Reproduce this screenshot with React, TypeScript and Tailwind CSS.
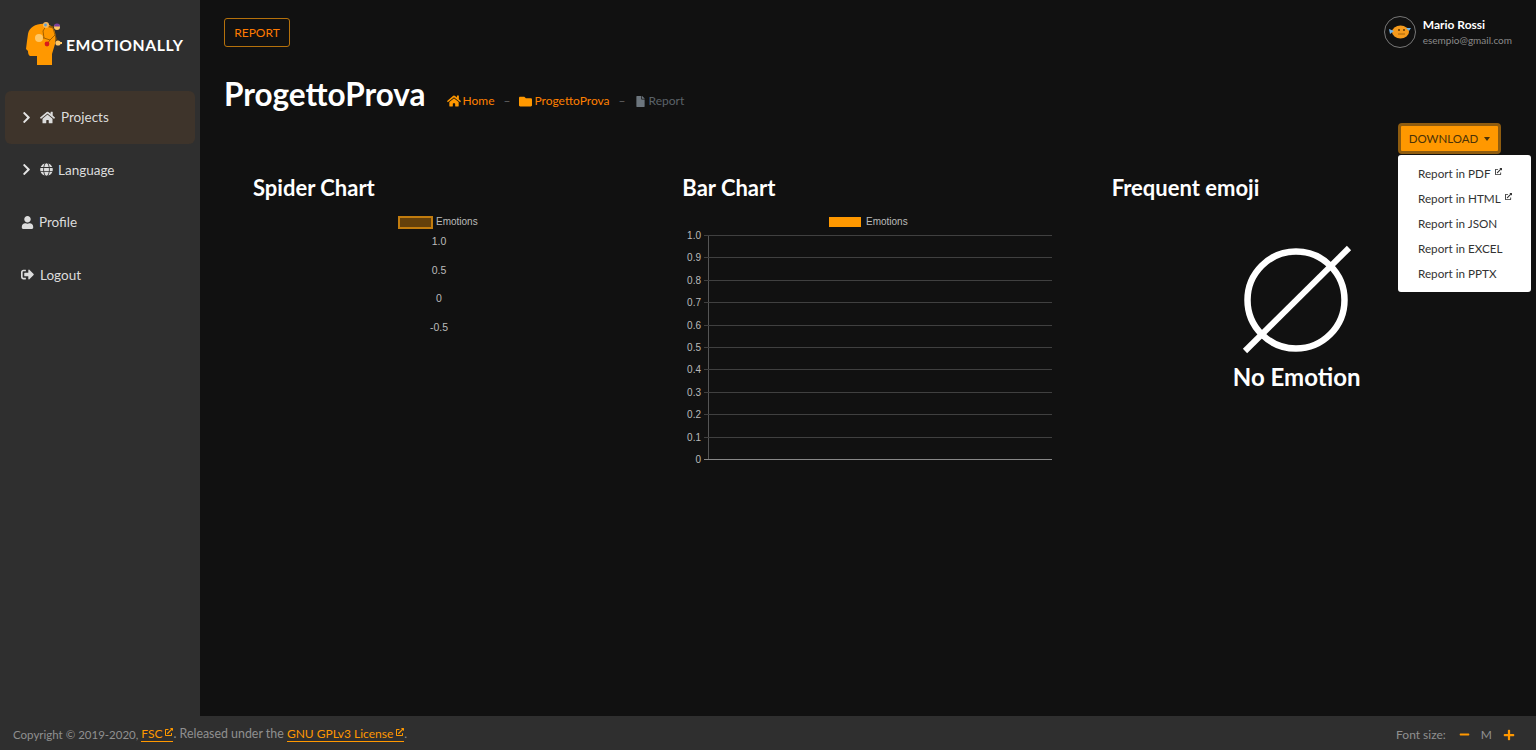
import { FaChevronRight, FaExternalLinkAlt, FaFile, FaFolder, FaGlobe, FaHome, FaMinus, FaPlus, FaSignOutAlt, FaUser } from "react-icons/fa";

const font = "font-['Lato','Open_Sans',sans-serif]";

// Head logo with the small emotion nodes
const Logo = () => (
  <svg width="42" height="48" viewBox="0 0 42 48" className="shrink-0">
    <path d="M3 15 C4 8 12 4 21 5 C29 6 32 14 30 25 L27 35 L27 46 L12 46 L12 37 L5 37 C3 36 3 33 3 32 L1 30 L2 22 Z" fill="#ff9800" />
    <path d="M21 7 L28 9 L30 16 L25 21 L19 19 L18 12 Z M21 7 L32 8 M30 16 L33 24 M25 21 L22 25 M19 19 L14 19" stroke="#8a5200" strokeWidth="0.8" fill="none" />
    <circle cx="14" cy="19" r="4" fill="#ffc766" />
    <circle cx="22" cy="25" r="2.4" fill="#d81b1b" />
    <circle cx="21" cy="6" r="3" fill="#f4b860" />
    <circle cx="20.5" cy="6" r="1.4" fill="#5aa0d8" />
    <circle cx="32" cy="8" r="3" fill="#ffc766" />
    <path d="M29 7.5 a3 3 0 0 1 6 0Z" fill="#7b3fa0" />
    <circle cx="33" cy="24" r="2.6" fill="#ffc766" />
    <rect x="34" y="23" width="3" height="2" fill="#ffc766" />
  </svg>
);

// Orange fish avatar
const Avatar = () => (
  <div className="w-[32px] h-[32px] rounded-full border border-[#777] flex items-center justify-center">
    <svg width="22" height="14" viewBox="0 0 22 14">
      <ellipse cx="11.5" cy="7" rx="8.5" ry="6.5" fill="#f59a1c" />
      <path d="M0 4 L5 6 L1 9Z" fill="#6fb2e8" />
      <path d="M17 3 L22 3 L20 6Z" fill="#6fb2e8" />
      <circle cx="10" cy="5" r="1" fill="#5a3200" />
      <circle cx="15" cy="5" r="1" fill="#5a3200" />
      <path d="M9 9 L16 9" stroke="#a8660a" strokeWidth="1" />
    </svg>
  </div>
);

const SideItem = ({ icon, label, arrow, active, iconWidth }: any) => (
  <div className={`h-[52.5px] mx-[5px] px-[16px] flex items-center rounded-md text-[13.5px] text-[#dcdcdc] ${active ? "bg-[#3e342b]" : ""}`}>
    {arrow && <FaChevronRight className="text-[13px] -ml-[1px] mr-[7px] text-[#e4e4e4]" />}
    <span className="flex justify-start text-[13px] text-[#dcdcdc]" style={{ width: iconWidth }}>{icon}</span>
    <span>{label}</span>
  </div>
);

const BarChart = () => {
  const ticks = ["1.0", "0.9", "0.8", "0.7", "0.6", "0.5", "0.4", "0.3", "0.2", "0.1", "0"];
  return (
    <svg width="370" height="256" viewBox="0 0 370 256" className="block">
      <rect x="147" y="7" width="32" height="10" fill="#ff9800" />
      <text x="184" y="15" fontSize="10" fontFamily="Liberation Sans" fill="#bbb">Emotions</text>
      <line x1="26.5" y1="25" x2="26.5" y2="249" stroke="#555" />
      {ticks.map((t, i) => {
        const y = Math.round(25 + i * 22.4) + 0.5;
        return (
          <g key={t}>
            <line x1="22" y1={y} x2="370" y2={y} stroke={i === 10 ? "#888" : "#404040"} />
            <text x="19" y={y + 3} textAnchor="end" fontSize="10" fontFamily="Liberation Sans" fill="#bbb">{t}</text>
          </g>
        );
      })}
    </svg>
  );
};

const SpiderChart = () => (
  <svg width="370" height="256" viewBox="0 0 370 256" className="block">
    <rect x="146" y="7" width="33" height="11" fill="#ff9800" fillOpacity="0.35" stroke="#c27c0e" strokeWidth="2" />
    <text x="183" y="15" fontSize="10" fontFamily="Liberation Sans" fill="#bbb">Emotions</text>
    {[["1.0", 35], ["0.5", 63.5], ["0", 92], ["-0.5", 120.5]].map(([t, y]) => (
      <text key={t} x="186" y={y} textAnchor="middle" fontSize="10.5" fontFamily="Liberation Sans" fill="#bbb">{t}</text>
    ))}
  </svg>
);

const NoEmotion = () => (
  <div className="flex flex-col items-center pt-[34px]">
    <svg width="112" height="112" viewBox="0 0 112 112">
      <circle cx="55" cy="56" r="48.5" fill="none" stroke="#fff" strokeWidth="6.5" />
      <line x1="4" y1="107" x2="108" y2="4" stroke="#fff" strokeWidth="6" />
    </svg>
    <div className="text-[24px] font-bold text-white mt-[4px] leading-[34px]">No Emotion</div>
  </div>
);

const MenuItem = ({ label, external }: any) => (
  <div className="h-[25px] px-[20px] flex items-center text-[#333] text-[11.7px] whitespace-nowrap pt-[1px]">
    {label}
    {external && <FaExternalLinkAlt className="text-[7px] ml-[4px] mb-[5px] shrink-0" />}
  </div>
);

export default function App() {
  return (
    <div className={`${font} h-screen w-full flex flex-col bg-[#111] overflow-hidden`}>
      <div className="flex flex-1 min-h-0">
        <aside className="w-[200px] shrink-0 bg-[#2f2f2f]">
          <div className="h-[91px] pl-[25px] pt-[19px] flex items-start">
            <Logo />
            <span className="text-white font-bold text-[15.7px] tracking-[0.6px] mt-[15px] -ml-[1px]">EMOTIONALLY</span>
          </div>
          <SideItem active arrow iconWidth={21} icon={<FaHome className="text-[15px]" />} label="Projects" />
          <SideItem arrow iconWidth={18} icon={<FaGlobe />} label="Language" />
          <SideItem iconWidth={18} icon={<FaUser />} label="Profile" />
          <SideItem iconWidth={19} icon={<FaSignOutAlt />} label="Logout" />
        </aside>

        <main className="flex-1 px-[24px] pt-[18px] relative">
          <div className="flex justify-between items-start h-[56px]">
            <button className="h-[29px] w-[66px] pt-[1px] border border-[#b5710c] rounded-[3px] text-[#ff7a00] text-[12px]">REPORT</button>
            <div className="flex items-center gap-[7px] -mt-[2px]">
              <Avatar />
              <div className="leading-none">
                <div className="text-white font-bold text-[12px] mb-[4px]">Mario Rossi</div>
                <div className="text-[#8a8a8a] text-[10px]">esempio@gmail.com</div>
              </div>
            </div>
          </div>

          <div className="flex items-end h-[40px]">
            <h1 className="text-[31.5px] font-bold text-white leading-[40px]">ProgettoProva</h1>
            <nav className="flex items-center text-[12px] ml-[21px] mb-[4px] text-[#ff8000]">
              <FaHome className="text-[14px] text-[#ff9800] mr-[2px]" />
              <span>Home</span>
              <span className="mx-[9px] text-[#666]">–</span>
              <FaFolder className="text-[13px] text-[#ff9800] mr-[2px]" />
              <span>ProgettoProva</span>
              <span className="mx-[9px] text-[#666]">–</span>
              <FaFile className="text-[11px] text-[#6c757d] mr-[3px]" />
              <span className="text-[#5b6268]">Report</span>
            </nav>
          </div>

          <div className="absolute left-[1198px] top-[123px] z-10">
            <button className="h-[31px] w-[103px] pt-[1px] bg-[#ff9800] rounded-[4px] border-[3px] border-[#8f5c0f] text-[#4a3208] text-[11.5px] flex items-center justify-center gap-[6px]">
              DOWNLOAD
              <span className="w-0 h-0 border-x-[3.5px] border-x-transparent border-t-[4px] border-t-[#4a3208]" />
            </button>
            <div className="w-[133px] h-[137px] mt-[1px] bg-white rounded-[3px] py-[6px]">
              <MenuItem label="Report in PDF" external />
              <MenuItem label="Report in HTML" external />
              <MenuItem label="Report in JSON" />
              <MenuItem label="Report in EXCEL" />
              <MenuItem label="Report in PPTX" />
            </div>
          </div>

          <section className="grid grid-cols-3 mt-[61px]">
            <div className="pl-[29px]">
              <h2 className="text-[22px] font-bold text-white leading-[26px] mb-[9px]">Spider Chart</h2>
              <div className="w-[370px]"><SpiderChart /></div>
            </div>
            <div className="pl-[29px]">
              <h2 className="text-[22px] font-bold text-white leading-[26px] mb-[9px]">Bar Chart</h2>
              <div className="w-[370px]"><BarChart /></div>
            </div>
            <div className="pl-[29px]">
              <h2 className="text-[22px] font-bold text-white leading-[26px] mb-[9px]">Frequent emoji</h2>
              <div className="w-[370px]"><NoEmotion /></div>
            </div>
          </section>
        </main>
      </div>

      <footer className="h-[34px] shrink-0 bg-[#2f2f2f] px-[13px] pt-[3px] flex items-center justify-between text-[12px] text-[#8f8f8f]">
        <div className="flex items-center whitespace-pre">
          <span className="text-[11.5px]">Copyright © 2019-2020, </span>
          <span className="text-[#ff9800] border-b border-[#ff9800] leading-[14px] flex items-center">FSC<FaExternalLinkAlt className="text-[8px] ml-[3px] mb-[4px]" /></span>
          <span className="text-[12.4px]">. Released under the </span>
          <span className="text-[#ff9800] border-b border-[#ff9800] leading-[14px] flex items-center">GNU GPLv3 License<FaExternalLinkAlt className="text-[8px] ml-[3px] mb-[4px]" /></span>
          <span>.</span>
        </div>
        <div className="flex items-center pr-[8px]">
          <span>Font size:</span>
          <FaMinus className="text-[11px] text-[#ff9800] ml-[13px]" />
          <span className="mx-[11px]">M</span>
          <FaPlus className="text-[12px] text-[#ff9800]" />
        </div>
      </footer>
    </div>
  );
}
